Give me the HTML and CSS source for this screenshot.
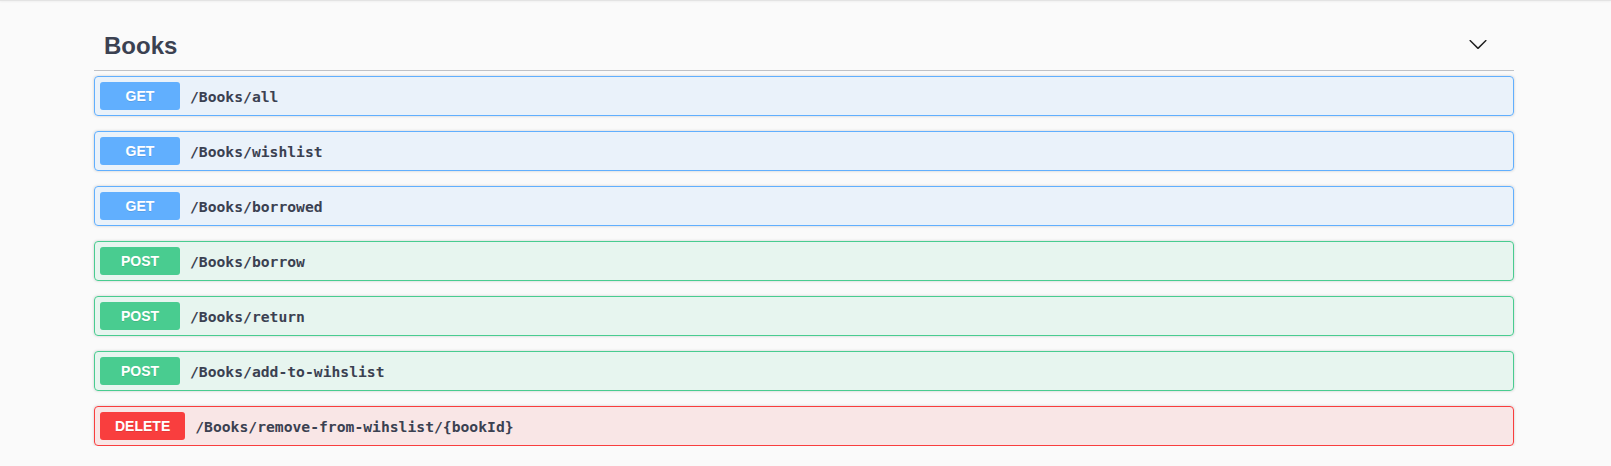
FILE: index.html
```html
<!DOCTYPE html>
<html lang="en">
<head>
<meta charset="utf-8">
<title>Books</title>
<link rel="stylesheet" href="styles.css">
</head>
<body>
<div class="topbar"></div>
<div class="wrapper">
  <section class="tag-section">
    <div class="tag-header">
      <h3 class="tag-title">Books</h3>
      <button class="expand" aria-label="Collapse operation">
        <svg width="20" height="20" viewBox="0 0 20 20" aria-hidden="true"><path d="M17.418 6.109c.272-.268.709-.268.979 0s.271.701 0 .969l-7.908 7.83c-.27.268-.707.268-.979 0l-7.908-7.83c-.27-.268-.27-.701 0-.969.271-.268.709-.268.979 0L10 13.25l7.418-7.141z"/></svg>
      </button>
    </div>
    <div class="ops">
      <div class="op op-get"><span class="method">GET</span><span class="path">/Books/all</span></div>
      <div class="op op-get"><span class="method">GET</span><span class="path">/Books/wishlist</span></div>
      <div class="op op-get"><span class="method">GET</span><span class="path">/Books/borrowed</span></div>
      <div class="op op-post"><span class="method">POST</span><span class="path">/Books/borrow</span></div>
      <div class="op op-post"><span class="method">POST</span><span class="path">/Books/return</span></div>
      <div class="op op-post"><span class="method">POST</span><span class="path">/Books/add-to-wihslist</span></div>
      <div class="op op-delete"><span class="method">DELETE</span><span class="path">/Books/remove-from-wihslist/{bookId}</span></div>
    </div>
  </section>
</div>
</body>
</html>
```
FILE: styles.css
```css
html, body {
  margin: 0;
  padding: 0;
  background: #fafafa;
  font-family: "Liberation Sans", Arial, sans-serif;
  color: #3b4151;
}

.topbar {
  height: 1px;
  background: #e3e3e3;
  box-shadow: 0 1px 2px rgba(0, 0, 0, 0.06);
}

.wrapper {
  width: 1420px;
  margin-left: 94px;
  padding-top: 21px;
}

.tag-header {
  display: flex;
  align-items: center;
  padding: 10px 26px 10px 10px;
  border-bottom: 1px solid rgba(59, 65, 81, 0.3);
  margin-bottom: 5px;
}

.tag-title {
  flex: 1;
  margin: 0;
  font-size: 24px;
  line-height: 28px;
  font-weight: 700;
  color: #3b4151;
}

.expand {
  border: none;
  background: none;
  padding: 0;
  margin: 0 0 5px 0;
  width: 20px;
  height: 20px;
  display: flex;
  cursor: pointer;
}

.expand svg {
  fill: #1f1f1f;
}

.ops {
  display: flex;
  flex-direction: column;
  gap: 15px;
}

.op {
  display: flex;
  align-items: center;
  padding: 5px;
  border: 1px solid;
  border-radius: 4px;
  box-shadow: 0 0 3px rgba(0, 0, 0, 0.19);
}

.method {
  min-width: 80px;
  box-sizing: border-box;
  padding: 6px 15px;
  font-size: 14px;
  line-height: 16px;
  font-weight: 700;
  text-align: center;
  color: #fff;
  border-radius: 3px;
  text-shadow: 0 1px 0 rgba(0, 0, 0, 0.1);
}

.path {
  padding: 0 10px;
  font-family: "DejaVu Sans Mono", "Liberation Mono", monospace;
  font-weight: 700;
  font-size: 14.7px;
  color: #3b4151;
}

.op-get {
  background: rgba(97, 175, 254, 0.1);
  border-color: #61affe;
}
.op-get .method { background: #61affe; }

.op-post {
  background: rgba(73, 204, 144, 0.1);
  border-color: #49cc90;
}
.op-post .method { background: #49cc90; }

.op-delete {
  background: rgba(249, 62, 62, 0.1);
  border-color: #f93e3e;
}
.op-delete .method { background: #f93e3e; }
```
